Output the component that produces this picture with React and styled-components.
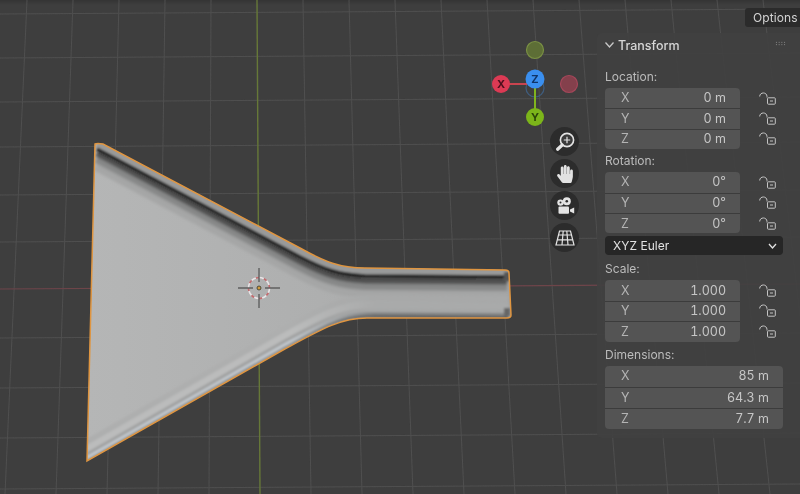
import styled, { createGlobalStyle } from 'styled-components';
import { FaHandPaper } from 'react-icons/fa';

const GlobalStyle = createGlobalStyle`
  html, body {
    margin: 0;
    padding: 0;
    background: #3e3e3e;
    overflow: hidden;
  }
  * {
    box-sizing: border-box;
  }
`;

const Viewport = styled.div`
  position: relative;
  width: 800px;
  height: 494px;
  overflow: hidden;
  background: linear-gradient(#343434, #3e3e3e 5px);
  font-family: Inter, "Liberation Sans", sans-serif;
`;

const Scene = styled.svg`
  display: block;
  width: 800px;
  height: 494px;
`;

const OptionsTab = styled.div`
  position: absolute;
  top: 8px;
  right: 0;
  width: 55px;
  height: 19px;
  padding-left: 8px;
  border-radius: 3px 0 0 3px;
  background: #2b2b2b;
  color: #d4d4d4;
  font-size: 12px;
  letter-spacing: 0.1px;
  line-height: 19px;
  filter: blur(0.3px);
`;

const GizmoSvg = styled.svg`
  position: absolute;
  left: 488px;
  top: 38px;
  width: 94px;
  height: 92px;
`;

const NavColumn = styled.div`
  position: absolute;
  left: 550px;
  top: 127px;
  display: flex;
  flex-direction: column;
  gap: 3px;
`;

const NavButton = styled.div`
  display: flex;
  align-items: center;
  justify-content: center;
  width: 29px;
  height: 29px;
  border-radius: 50%;
  background: #2c2c2c;
  color: #e2e2e2;
  filter: blur(0.25px);
`;

const Panel = styled.div`
  position: absolute;
  top: 33px;
  right: 0;
  width: 203px;
  padding: 2px 17px 9px 8px;
  border-radius: 5px 0 0 5px;
  background: rgba(64, 64, 64, 0.9);
  color: #c4c4c4;
  filter: blur(0.35px);
`;

const PanelHeader = styled.div`
  display: flex;
  align-items: center;
  height: 20px;
  margin-bottom: 13px;
  color: #d6d6d6;
  font-size: 12.5px;
  font-weight: 500;
`;

const Chevron = styled.svg`
  width: 9px;
  height: 6px;
  margin-right: 4px;
  fill: none;
  stroke: ${(p) => p.$color || '#c8c8c8'};
  stroke-width: 1.3;
`;

const Grip = styled.div`
  width: 11px;
  height: 5px;
  margin-left: auto;
  margin-right: -3px;
  margin-top: -3px;
  background-image: radial-gradient(circle, #9c9c9c 0.55px, transparent 0.7px);
  background-size: 2.75px 2.5px;
`;

const SectionLabel = styled.div`
  height: 16px;
  margin-top: ${(p) => p.$top || 0}px;
  margin-bottom: ${(p) => p.$bottom || 4}px;
  color: #bcbcbc;
  font-size: 12px;
  line-height: 18px;
`;

const FieldRowWrap = styled.div`
  display: flex;
  align-items: stretch;
`;

const FieldGroup = styled.div`
  flex: ${(p) => (p.$wide ? 1 : '0 0 135px')};
  border-radius: 4px;
  overflow: hidden;
  background: #545454;
`;

const Field = styled.div`
  display: flex;
  align-items: center;
  justify-content: space-between;
  height: ${(p) => p.$height}px;
  padding: 0 14px 1px 16px;
  color: #c6c6c6;
  font-size: 12.5px;
  font-variant-numeric: tabular-nums;
  & + & {
    border-top: 1px solid #3c3c3c;
  }
`;

const AxisName = styled.span`
  color: #b4b4b4;
`;

const LockColumn = styled.div`
  display: flex;
  flex-direction: column;
  margin-left: 19px;
`;

const LockCell = styled.div`
  display: flex;
  align-items: center;
  height: ${(p) => p.$height}px;
`;

const LockIcon = styled.svg`
  width: 17px;
  height: 13px;
  fill: none;
  stroke: #c4c4c4;
  stroke-width: 1;
`;

const Dropdown = styled.div`
  display: flex;
  align-items: center;
  justify-content: space-between;
  height: 19px;
  margin-top: 3px;
  padding: 0 2px 0 8px;
  border-radius: 4px;
  background: #262626;
  color: #e2e2e2;
  font-size: 12px;
  letter-spacing: 0.05px;
`;

const gridX = [-5, -4, -3, -2, -1, 1, 2, 3, 4, 5, 6, 7, 8, 9, 10, 11];
const gridY = [14, 58, 102, 147, 195, 242, 338, 388, 438, 489];

const innerCrease = 'M97 149 L300 257 C325 270 340 275 365 276 L507 277';
const bottomEdge = 'M87 462 L283 350 C320 330 340 318 367 318 L508 319';
const outline =
  'M95 144 Q97 143 103 144 L300 248 C325 262 340 268 365 268 L505 270 Q509 270 509 273 L511 315 Q511 318 507 318 L367 318 C340 318 320 330 283 350 L87 461 Z';

// stripes run parallel to the rim, painted from the widest to the narrowest
const shadeBands = [
  { dy: 15, width: 14, color: '#a5a6a6' },
  { dy: 9, width: 10, color: '#878888' },
  { dy: 4, width: 7, color: '#4f5050' },
];

const creaseBands = [
  { dy: -5, width: 8, color: '#999a9a' },
  { dy: 0, width: 3.4, color: '#1c1c1c' },
];

const bottomBands = [
  { dy: -20, width: 6, color: '#aeafaf', neck: '#a8a9a9' },
  { dy: -13, width: 7, color: '#bbbcbc', neck: '#a9aaaa' },
  { dy: -8, width: 3, color: '#a0a1a1', neck: '#a6a7a7' },
  { dy: -4, width: 3.5, color: '#c2c8cd', neck: '#808181' },
  { dy: -1.5, width: 2, color: '#868787', neck: '#4f5050' },
];

const rows = {
  location: ['0 m', '0 m', '0 m'],
  rotation: ['0°', '0°', '0°'],
  scale: ['1.000', '1.000', '1.000'],
  dimensions: ['85 m', '64.3 m', '7.7 m'],
};

const axes = ['X', 'Y', 'Z'];

const Lock = () => (
  <LockIcon viewBox="0 0 17 13">
    <path d="M0.7 4.5 C0.7 -0.2 8 -0.2 8 4.5 L8 5.5" />
    <rect x="8.5" y="5.8" width="7.8" height="6.4" rx="0.8" />
    <path d="M11 9 H14" />
  </LockIcon>
);

const Fields = ({ values, height, wide, locks }) => (
  <FieldRowWrap>
    <FieldGroup $wide={wide}>
      {values.map((value, i) => (
        <Field key={axes[i]} $height={height}>
          <AxisName>{axes[i]}</AxisName>
          <span>{value}</span>
        </Field>
      ))}
    </FieldGroup>
    {locks && (
      <LockColumn>
        {axes.map((a) => (
          <LockCell key={a} $height={height}>
            <Lock />
          </LockCell>
        ))}
      </LockColumn>
    )}
  </FieldRowWrap>
);

const Bands = ({ bands }) =>
  bands.map((b) => (
    <path
      key={b.dy}
      d={innerCrease}
      transform={`translate(0 ${b.dy})`}
      stroke={b.color}
      strokeWidth={b.width}
    />
  ));

const MeshView = () => (
  <Scene viewBox="0 0 800 494">
    <defs>
      <clipPath id="meshClip">
        <path d={outline} />
      </clipPath>
      <linearGradient id="meshFill" x1="0" y1="0" x2="1" y2="0">
        <stop offset="0" stopColor="#b5b6b6" />
        <stop offset="0.55" stopColor="#aeafaf" />
        <stop offset="1" stopColor="#a3a4a4" />
      </linearGradient>
      {bottomBands.map((b) => (
        <linearGradient key={b.dy} id={`band${b.dy}`} gradientUnits="userSpaceOnUse" x1="290" y1="0" x2="375" y2="0">
          <stop offset="0" stopColor={b.color} />
          <stop offset="1" stopColor={b.neck} />
        </linearGradient>
      ))}
      <filter id="soft" x="-5%" y="-5%" width="110%" height="110%">
        <feGaussianBlur stdDeviation="0.85" />
      </filter>
      <filter id="wide" x="-5%" y="-5%" width="110%" height="110%">
        <feGaussianBlur stdDeviation="1.8" />
      </filter>
      <filter id="softer" x="-5%" y="-5%" width="110%" height="110%">
        <feGaussianBlur stdDeviation="0.35" />
      </filter>
    </defs>

    <g stroke="#4f4f4f" strokeWidth="1" fill="none" filter="url(#softer)">
      {gridX.map((k) => (
        <line key={k} x1={257 + k * 46} y1="0" x2={260 + k * 51} y2="494" />
      ))}
      {gridY.map((y) => (
        <line key={y} x1="0" y1={y} x2="800" y2={y - 5} />
      ))}
      <line x1="0" y1="289" x2="800" y2="284" stroke="#6e444a" strokeWidth="1.2" />
      <line x1="257" y1="0" x2="260" y2="494" stroke="#667838" strokeWidth="1.4" />
    </g>

    <path d={outline} fill="url(#meshFill)" />
    <g clipPath="url(#meshClip)" fill="none">
      <g filter="url(#wide)">
        <Bands bands={shadeBands} />
      </g>
      <g filter="url(#soft)">
        <Bands bands={creaseBands} />
        {bottomBands.map((b) => (
          <path
            key={b.dy}
            d={bottomEdge}
            transform={`translate(0 ${b.dy})`}
            stroke={`url(#band${b.dy})`}
            strokeWidth={b.width}
          />
        ))}
        <path d="M507 272 V281" stroke="#555" strokeWidth="6" />
        <path d="M507 308 V316" stroke="#666" strokeWidth="6" />
      </g>
    </g>
    <path d={outline} fill="none" stroke="#df9540" strokeWidth="1.5" filter="url(#softer)" />

    <g filter="url(#softer)">
      <circle
        cx="259"
        cy="288"
        r="10.5"
        fill="none"
        stroke="#e9e4e6"
        strokeWidth="1.6"
        strokeDasharray="5 3.2"
      />
      <circle
        cx="259"
        cy="288"
        r="10.5"
        fill="none"
        stroke="#c56a6e"
        strokeWidth="1.6"
        strokeDasharray="3.2 5"
        strokeDashoffset="-5"
      />
      <path d="M238 288 H253 M265 288 H280 M259 268 V282 M259 294 V308" stroke="#5f5f5f" strokeWidth="1.4" />
      <circle cx="259" cy="288" r="2" fill="#d09a3a" stroke="#4a4a3a" strokeWidth="1" />
    </g>
  </Scene>
);

const Gizmo = () => (
  <GizmoSvg viewBox="488 38 94 92">
    <g filter="blur(0.3px)" fontFamily="Inter, 'Liberation Sans', sans-serif" fontSize="11" fontWeight="700" textAnchor="middle">
      <circle cx="535" cy="88" r="9" fill="none" stroke="#3f5d7e" strokeWidth="1.2" />
      <circle cx="535" cy="50" r="8.5" fill="#5d6e36" stroke="#7a9044" strokeWidth="1.2" />
      <circle cx="569" cy="84" r="8.5" fill="#84404c" stroke="#a5475a" strokeWidth="1.2" />
      <line x1="508" y1="84" x2="527" y2="84" stroke="#c9444f" strokeWidth="2" />
      <line x1="535" y1="86" x2="535" y2="110" stroke="#80b41e" strokeWidth="2" />
      <circle cx="501" cy="84" r="9" fill="#dc3a54" />
      <text x="501" y="88" fill="#4d0f1c">X</text>
      <circle cx="535" cy="117" r="9" fill="#7cb51a" />
      <text x="535" y="121" fill="#2b4508">Y</text>
      <circle cx="535" cy="79" r="9.5" fill="#3a8fef" />
      <text x="535" y="83" fill="#0f3468">Z</text>
    </g>
  </GizmoSvg>
);

const ZoomIcon = () => (
  <svg width="20" height="20" viewBox="0 0 20 20" fill="none" stroke="#e4e4e4">
    <circle cx="12" cy="8" r="6.6" strokeWidth="1.6" fill="#3a3a3a" />
    <path d="M12 4.8 V11.2 M8.8 8 H15.2" strokeWidth="1.2" />
    <path d="M7.2 13 L2.6 17.2" strokeWidth="3.2" strokeLinecap="round" />
  </svg>
);

const CameraIcon = () => (
  <svg width="20" height="18" viewBox="0 0 20 18" fill="#e4e4e4">
    <circle cx="5.5" cy="5.6" r="3.2" />
    <circle cx="11.8" cy="4.2" r="4" />
    <circle cx="5.5" cy="5.6" r="1" fill="#2c2c2c" />
    <circle cx="11.8" cy="4.2" r="1.3" fill="#2c2c2c" />
    <rect x="3.5" y="9.4" width="10.5" height="7.4" rx="1" />
    <path d="M15 12.6 L19.2 10.4 V16.4 L15 14.6 Z" />
  </svg>
);

const GridIcon = () => (
  <svg width="20" height="16" viewBox="0 0 20 16" fill="none" stroke="#e4e4e4" strokeWidth="1.2">
    <path d="M4.5 1 H15.5 L19 15 H1 Z" />
    <path d="M8.2 1 L7 15 M11.8 1 L13 15 M3.6 5 H16.4 M2.4 9.8 H17.6" />
  </svg>
);

const App = () => (
  <Viewport>
    <GlobalStyle />
    <MeshView />
    <OptionsTab>Options</OptionsTab>
    <Gizmo />
    <NavColumn>
      <NavButton>
        <ZoomIcon />
      </NavButton>
      <NavButton>
        <FaHandPaper size={18} />
      </NavButton>
      <NavButton>
        <CameraIcon />
      </NavButton>
      <NavButton>
        <GridIcon />
      </NavButton>
    </NavColumn>
    <Panel>
      <PanelHeader>
        <Chevron viewBox="0 0 9 6">
          <path d="M0.5 0.5 L4.5 5 L8.5 0.5" />
        </Chevron>
        Transform
        <Grip />
      </PanelHeader>
      <SectionLabel>Location:</SectionLabel>
      <Fields values={rows.location} height={20.4} locks />
      <SectionLabel $top={3}>Rotation:</SectionLabel>
      <Fields values={rows.rotation} height={20.4} locks />
      <Dropdown>
        XYZ Euler
        <Chevron $color="#e2e2e2" viewBox="0 0 9 6">
          <path d="M1 1 L4.5 5 L8 1" />
        </Chevron>
      </Dropdown>
      <SectionLabel $top={5}>Scale:</SectionLabel>
      <Fields values={rows.scale} height={20.4} locks />
      <SectionLabel $top={4} $bottom={4}>
        Dimensions:
      </SectionLabel>
      <Fields values={rows.dimensions} height={21} wide />
    </Panel>
  </Viewport>
);

export default App;
